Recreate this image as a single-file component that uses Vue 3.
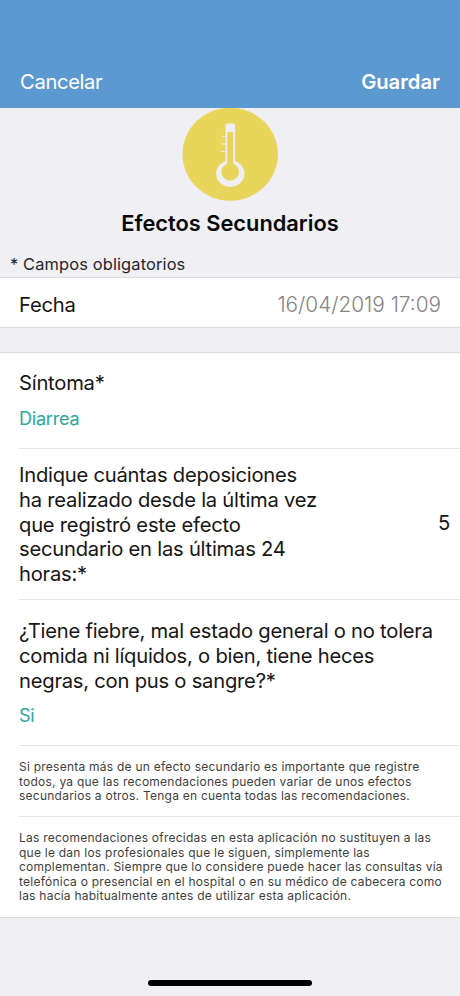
<script setup>
const deposiciones = [
  'Indique cuántas deposiciones',
  'ha realizado desde la última vez',
  'que registró este efecto',
  'secundario en las últimas 24',
  'horas:*',
]
const fiebre = [
  '¿Tiene fiebre, mal estado general o no tolera',
  'comida ni líquidos, o bien, tiene heces',
  'negras, con pus o sangre?*',
]
const avisoEfectos = [
  'Si presenta más de un efecto secundario es importante que registre',
  'todos, ya que las recomendaciones pueden variar de unos efectos',
  'secundarios a otros. Tenga en cuenta todas las recomendaciones.',
]
const avisoLegal = [
  'Las recomendaciones ofrecidas en esta aplicación no sustituyen a las',
  'que le dan los profesionales que le siguen, simplemente las',
  'complementan. Siempre que lo considere puede hacer las consultas vía',
  'telefónica o presencial en el hospital o en su médico de cabecera como',
  'las hacía habitualmente antes de utilizar esta aplicación.',
]
</script>

<template>
  <div class="screen">
    <header class="nav">
      <span class="cancel">Cancelar</span>
      <span class="save">Guardar</span>
    </header>

    <section class="hero">
      <svg class="badge" width="96" height="93" viewBox="0 0 96 93">
        <ellipse cx="48.200" cy="46.200" rx="47.700" ry="46.500" fill="#e9d55b" />
        <path d="M43.500 53V17.500q0-2 2-2h5.600q2 0 2 2V53A14.200 13.400 0 1 1 43.500 53Z" fill="#efeff3" />
        <path d="M45.200 24h6v31.700a8.700 8.700 0 1 1-6 0Z" fill="#e9d55b" />
        <path d="M40.500 28.500h3M39 36h4.500M39 43.500h4.500" stroke="#efeff3" stroke-width="1" />
        <path d="M40 25h1.500M42 31.500l-1.500 1" stroke="#efeff3" stroke-width=".6" opacity=".5" />
      </svg>
      <h1 class="title">Efectos Secundarios</h1>
      <p class="required">* Campos obligatorios</p>
    </section>

    <section class="date-row">
      <span class="date-label">Fecha</span>
      <span class="date-value">16/04/2019 17:09</span>
    </section>

    <section class="form">
      <div class="cell symptom">
        <p class="question"><span class="line">Síntoma*</span></p>
        <p class="answer">Diarrea</p>
      </div>
      <div class="cell count">
        <p class="question"><span v-for="l in deposiciones" :key="l" class="line">{{ l }}</span></p>
        <span class="number">5</span>
      </div>
      <div class="cell fever">
        <p class="question"><span v-for="l in fiebre" :key="l" class="line">{{ l }}</span></p>
        <p class="answer">Si</p>
      </div>
      <div class="cell note first">
        <span v-for="l in avisoEfectos" :key="l" class="line">{{ l }}</span>
      </div>
      <div class="cell note last">
        <span v-for="l in avisoLegal" :key="l" class="line">{{ l }}</span>
      </div>
    </section>

    <footer class="home"><div class="home-bar"></div></footer>
  </div>
</template>

<style>
body {
  margin: 0;
  background: #efeff4;
}
</style>

<style scoped>
.screen {
  width: 460px;
  height: 996px;
  overflow: hidden;
  display: flex;
  flex-direction: column;
  background: #efeff4;
  font-family: Inter, "Liberation Sans", sans-serif;
  color: #161616;
}
p, h1 {
  margin: 0;
}
.line {
  display: block;
  white-space: nowrap;
}
.nav {
  box-sizing: border-box;
  height: 108px;
  flex: none;
  padding: 69px 20px 0;
  display: flex;
  justify-content: space-between;
  background: #5d99d1;
  color: #fff;
  font-size: 20.2px;
  line-height: 26px;
}
.cancel {
  letter-spacing: -0.35px;
}
.save {
  font-weight: 600;
}
.hero {
  height: 169px;
  flex: none;
  display: flex;
  flex-direction: column;
  align-items: center;
}
.badge {
  display: block;
  flex: none;
}
.title {
  margin-top: 7px;
  font-size: 21.8px;
  line-height: 30px;
  font-weight: 600;
  color: #080808;
  white-space: nowrap;
}
.required {
  align-self: flex-start;
  margin: 14px 0 0 10px;
  font-size: 16.4px;
  line-height: 24px;
  color: #262628;
  letter-spacing: 0.14px;
}
.date-row {
  box-sizing: border-box;
  height: 51px;
  flex: none;
  padding: 0 19px;
  display: flex;
  align-items: center;
  justify-content: space-between;
  background: #fff;
  border-top: 1px solid #dcdce0;
  border-bottom: 1px solid #dcdce0;
  font-size: 20.2px;
  line-height: 26px;
}
.date-label {
  padding-top: 5px;
  letter-spacing: -0.2px;
}
.date-value {
  padding-top: 4px;
  font-size: 20.8px;
  color: #858587;
  font-weight: 300;
}
.form {
  margin-top: 24px;
  height: 566px;
  box-sizing: border-box;
  flex: none;
  background: #fff;
  border-top: 1px solid #dcdce0;
  border-bottom: 1px solid #dcdce0;
  display: flex;
  flex-direction: column;
}
.cell {
  box-sizing: border-box;
  margin-left: 19px;
  flex: none;
  border-bottom: 1px solid #e6e6e8;
}
.question,
.number {
  font-size: 20.2px;
  line-height: 24.9px;
  letter-spacing: -0.23px;
}
.number {
  padding-bottom: 3px;
}
.answer {
  font-size: 18px;
  line-height: 24px;
  letter-spacing: -0.2px;
  color: #2aa8a2;
}
.symptom {
  height: 96px;
  padding-top: 18px;
}
.symptom .answer {
  margin-top: 11px;
}
.count {
  height: 151px;
  padding: 2px 10px 0 0;
  display: flex;
  align-items: center;
  justify-content: space-between;
}
.fever {
  height: 146px;
  padding-top: 19px;
}
.fever .answer {
  margin-top: 10px;
}
.note {
  font-size: 12px;
  line-height: 14.6px;
  letter-spacing: 0.24px;
  color: #3e3e3e;
}
.first {
  height: 71px;
  padding-top: 14px;
}
.last {
  height: 100px;
  padding-top: 14px;
  border-bottom: 0;
}
.home {
  flex: 1;
  display: flex;
  justify-content: center;
  align-items: flex-end;
  padding-bottom: 10px;
}
.home-bar {
  width: 164px;
  height: 6px;
  border-radius: 3px;
  background: #000;
}
</style>
